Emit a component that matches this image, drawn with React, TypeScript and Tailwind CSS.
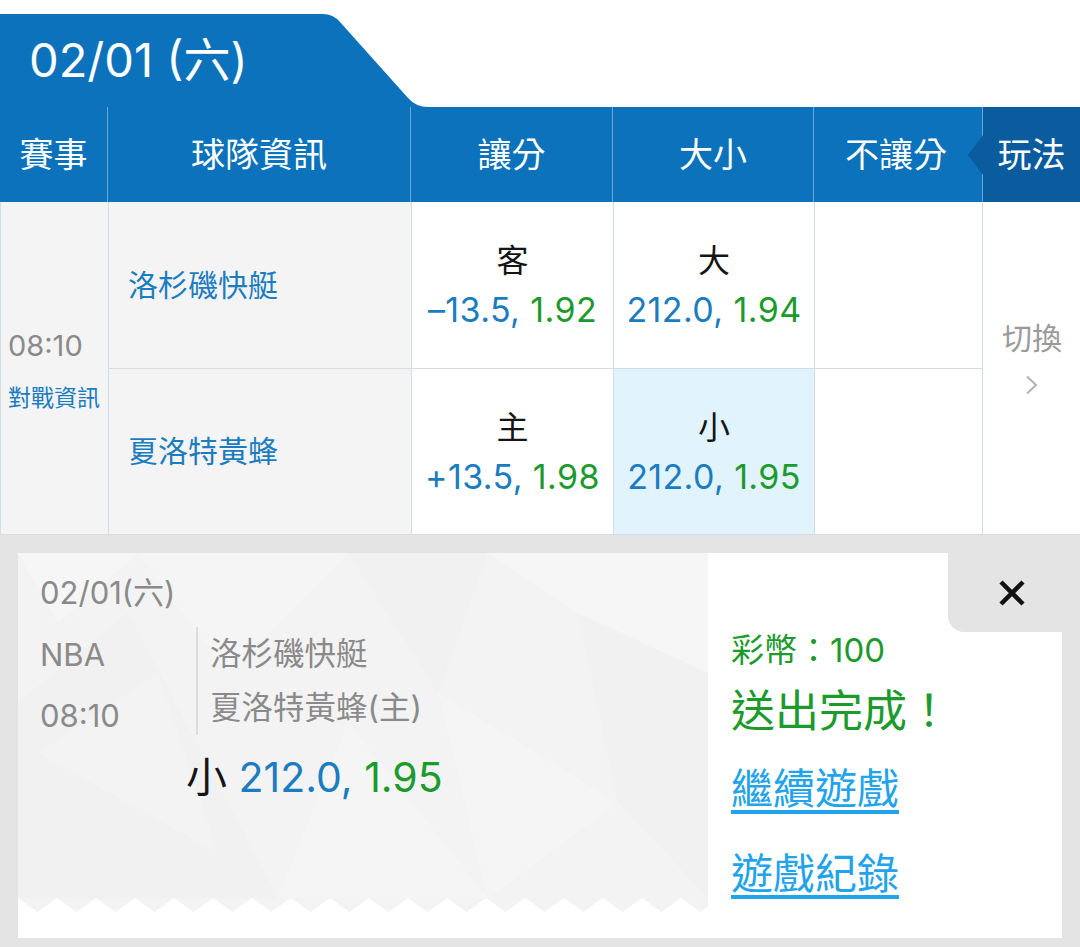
import React from 'react';

const cols = 'grid grid-cols-[108px_303px_202px_201px_168px_98px]';
const line = 'border-[#d3dde7]';

type OddsProps = {
  label: string;
  handicap: string;
  price: string;
  active?: boolean;
};

function Odds({ label, handicap, price, active }: OddsProps) {
  return (
    <div
      className={`flex flex-col items-center justify-center border-r border-b ${line} leading-[49px] ${
        active ? 'bg-[#e1f3fc]' : 'bg-white'
      }`}
    >
      <span className="text-[32px] text-[#151515]">{label}</span>
      <span className="whitespace-nowrap text-[34px] tracking-[0.4px]">
        <span className="text-[#1b7cc0]">{handicap},</span>{' '}
        <span className="text-[#1c9a2c]">{price}</span>
      </span>
    </div>
  );
}

function TeamCell({ name }: { name: string }) {
  return (
    <div className={`flex items-center bg-[#f4f4f4] border-r border-b ${line} pl-[19px] text-[30px] text-[#1b7cc0]`}>
      {name}
    </div>
  );
}

function TicketTexture() {
  // faint low-poly facets behind the ticket text
  return (
    <svg className="absolute inset-0 h-full w-full" viewBox="0 0 690 345" preserveAspectRatio="none">
      <polygon points="0,0 120,0 40,70" fill="#ffffff" opacity="0.3" />
      <polygon points="120,0 330,0 210,120" fill="#ffffff" opacity="0.2" />
      <polygon points="0,150 110,60 260,345 0,345" fill="#ededed" opacity="0.25" />
      <polygon points="260,345 330,170 470,345" fill="#ffffff" opacity="0.22" />
      <polygon points="330,0 470,0 420,140" fill="#eeeeee" opacity="0.3" />
      <polygon points="470,0 690,0 690,120 560,60" fill="#ffffff" opacity="0.25" />
      <polygon points="560,60 690,120 690,345 600,250" fill="#eeeeee" opacity="0.3" />
      <polygon points="420,140 600,250 470,345" fill="#f8f8f8" opacity="0.35" />
      <polygon points="20,200 140,120 200,300" fill="#ffffff" opacity="0.18" />
    </svg>
  );
}

function Zigzag() {
  const teeth = Array.from({ length: 18 }, (_, i) => i * 39);
  return (
    <svg width="690" height="14" viewBox="0 0 690 14" className="block">
      {teeth.map((x) => (
        <polygon key={x} points={`${x},0 ${x + 39},0 ${x + 19.5},14`} fill="#f3f3f3" />
      ))}
    </svg>
  );
}

export default function App() {
  return (
    <div className="w-[1080px] h-[947px] overflow-hidden bg-white [font-family:Inter,'Noto_Sans_CJK_TC',sans-serif]">
      {/* date tab */}
      <div className="flex pt-[14px]">
        <div className="flex h-[93px] w-[305px] items-center bg-[#0b72bb] pl-[29px] text-[47px] text-white">
          02/01 (六)
        </div>
        <svg width="130" height="93" viewBox="0 0 130 93" className="block shrink-0">
          <path d="M0,0 L18,0 Q28,0 35,8 L103,84 Q111,93 123,93 L130,93 L0,93 Z" fill="#0b72bb" />
        </svg>
      </div>

      {/* column headers */}
      <div className={`${cols} h-[95px] bg-[#0b72bb] text-[34px] text-white`}>
        <div className="flex items-center justify-center border-r border-[#6aa8d8]">賽事</div>
        <div className="flex items-center justify-center border-r border-[#6aa8d8]">球隊資訊</div>
        <div className="flex items-center justify-center border-r border-[#6aa8d8]">讓分</div>
        <div className="flex items-center justify-center border-r border-[#6aa8d8]">大小</div>
        <div className="flex items-center justify-center pr-[4px]">不讓分</div>
        <div className="relative flex items-center justify-center border-l border-[#6aa8d8] bg-[#0a5c9f]">
          <span className="absolute left-[-15px] top-1/2 h-0 w-0 -translate-y-1/2 border-y-[20px] border-r-[15px] border-y-transparent border-r-[#0a5c9f]" />
          玩法
        </div>
      </div>

      {/* odds table */}
      <div className={`${cols} grid-rows-[167px_166px] border-l ${line}`}>
        <div className={`row-span-2 flex flex-col justify-center bg-[#f4f4f4] border-r border-b ${line} pl-[7px] pt-[2px]`}>
          <span className="text-[29px] leading-[40px] text-[#8a8a8a]">08:10</span>
          <span className="mt-[17px] text-[23px] leading-[30px] text-[#1b7cc0]">對戰資訊</span>
        </div>
        <TeamCell name="洛杉磯快艇" />
        <Odds label="客" handicap="–13.5" price="1.92" />
        <Odds label="大" handicap="212.0" price="1.94" />
        <div className={`border-r border-b ${line}`} />
        <div className={`row-span-2 flex flex-col items-center justify-center border-b ${line} pb-[24px]`}>
          <span className="text-[30px] leading-[40px] text-[#9a9a9a]">切換</span>
          <svg width="14" height="20" viewBox="0 0 14 20" className="mt-[17px]">
            <polyline points="2,1.5 11,10 2,18.5" fill="none" stroke="#b3b3b3" strokeWidth="2" />
          </svg>
        </div>
        <TeamCell name="夏洛特黃蜂" />
        <Odds label="主" handicap="+13.5" price="1.98" />
        <Odds label="小" handicap="212.0" price="1.95" active />
        <div className={`border-r border-b ${line}`} />
      </div>

      {/* bet receipt */}
      <div className="h-[412px] bg-[#e4e4e4] px-[18px] pt-[18px]">
        <div className="relative flex h-[385px] bg-white">
          <div className="w-[690px] shrink-0">
            <div className="relative h-[345px] bg-[#f3f3f3] pl-[22px] pt-[20px] text-[#8a8a8a]">
              <TicketTexture />
              <div className="relative">
                <div className="text-[31px] leading-[40px]">02/01(六)</div>
                <div className="mt-[11px] flex items-start">
                  <div className="w-[156px] text-[31px] leading-[61px]">
                    <div>NBA</div>
                    <div>08:10</div>
                  </div>
                  <div className="mt-[3px] border-l-2 border-[#dcdcdc] pl-[12px] text-[31.5px] leading-[54px]">
                    <div>洛杉磯快艇</div>
                    <div>夏洛特黃蜂(主)</div>
                  </div>
                </div>
                <div className="mt-[6px] pl-[146px] text-[41px] leading-[50px]">
                  <span className="text-[#151515]">小</span>{' '}
                  <span className="text-[#1b7cc0]">212.0,</span>{' '}
                  <span className="text-[#1c9a2c]">1.95</span>
                </div>
              </div>
            </div>
            <Zigzag />
          </div>

          <div className="flex flex-col pl-[23px] pt-[76px]">
            <div className="text-[33px] leading-[42px] text-[#1c9a2c]">彩幣：100</div>
            <div className="mt-[12px] text-[44px] leading-[56px] text-[#1c9a2c]">送出完成！</div>
            <a className="mt-[25px] text-[42px] leading-[50px] text-[#22a3ea] underline underline-offset-[6px]">繼續遊戲</a>
            <a className="mt-[35px] text-[42px] leading-[50px] text-[#22a3ea] underline underline-offset-[6px]">遊戲紀錄</a>
          </div>

          <div className="absolute right-0 top-0 flex h-[79px] w-[114px] items-center justify-center rounded-bl-[16px] bg-[#e4e4e4] pt-[1px] pl-[14px]">
            <svg width="28" height="28" viewBox="0 0 28 28">
              <path d="M3,3 L25,25 M25,3 L3,25" stroke="#111" strokeWidth="4.5" />
            </svg>
          </div>
        </div>
      </div>
    </div>
  );
}
